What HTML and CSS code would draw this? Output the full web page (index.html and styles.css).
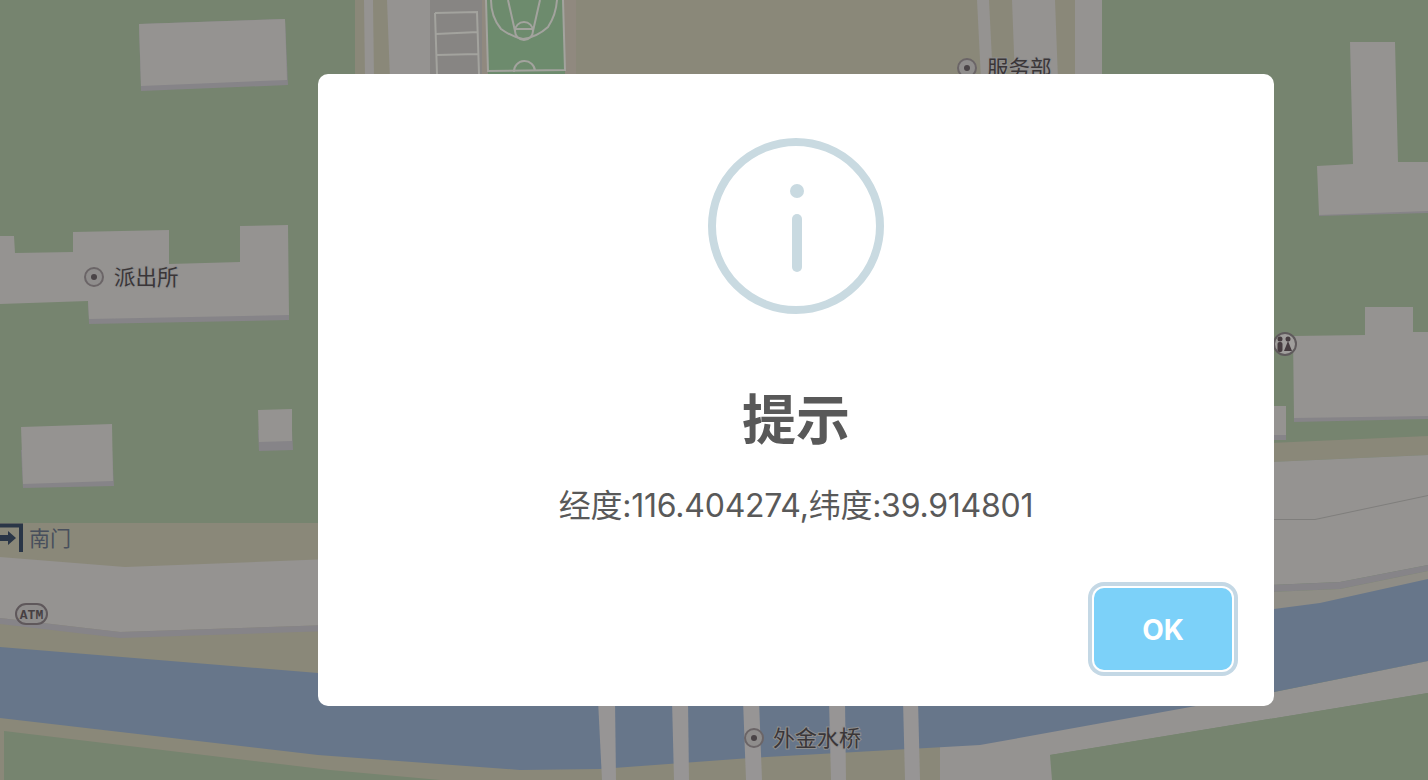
FILE: index.html
```html
<!DOCTYPE html>
<html lang="zh-CN">
<head>
  <meta charset="UTF-8">
  <meta name="viewport" content="width=device-width, initial-scale=1.0">
  <title>提示</title>
  <link rel="stylesheet" href="styles.css">
</head>
<body>
  <!-- 地图底图 -->
  <svg class="map" viewBox="0 0 1428 780" width="1428" height="780" aria-hidden="true">
    <!-- 上方地块 -->
    <rect class="sand" x="355" y="0" width="747" height="80"/>
    <polygon class="road" points="364,0 373,0 374,80 365,80"/>
    <polygon class="road" points="387,0 430,0 434,80 390,80"/>
    <rect class="court-bed" x="430" y="0" width="53" height="80"/>
    <rect class="court-edge" x="482" y="0" width="94" height="80"/>
    <polygon class="court-green" points="486,0 563,0 565,74 488,74"/>
    <g class="court-line">
      <path d="M435 13 L477 12 L479 74 M435 13 L437 74 M436 34 L478 32 M437 55 L478 54"/>
      <path d="M486 0 L488 71 L565 70 L563 0"/>
      <path d="M508 0 L515 31 M540 0 L533 31 M515 29 L533 29"/>
      <path d="M491 0 Q491 17 501 29 Q512 37 523 39 Q537 37 548 27 Q556 15 557 0"/>
      <path d="M515 31 A9 9 0 1 1 533 31 A9 9 0 0 1 515 31"/>
      <path d="M514 72 A10 10 0 0 1 535 71"/>
    </g>
    <polygon class="road" points="977,0 989,0 993,80 981,80"/>
    <polygon class="road" points="1012,0 1055,0 1058,80 1015,80"/>
    <rect class="road" x="1075" y="0" width="27" height="80"/>

    <!-- 建筑 -->
    <polygon class="shade" points="139,24 285,19 288,85 141,91"/>
    <polygon class="building" points="139,24 285,19 287,80 141,86"/>
    <polygon class="shade" points="0,300 88,298 89,324 289,320 289,310 0,290"/>
    <polygon class="building" points="0,236 14,236 15,253 73,252 73,232 169,230 169,264 240,262 240,226 288,225 289,315 89,319 88,301 0,304"/>
    <polygon class="shade" points="21,450 112,450 114,486 23,488"/>
    <polygon class="building" points="21,427 112,424 113,481 23,484"/>
    <polygon class="shade" points="258,430 292,430 293,450 259,451"/>
    <polygon class="building" points="258,410 292,409 292,441 259,442"/>
    <polygon class="shade" points="1319,190 1428,190 1428,213 1319,216"/>
    <polygon class="building" points="1350,42 1395,42 1398,162 1428,162 1428,211 1319,215 1317,166 1353,164"/>
    <polygon class="shade" points="1294,400 1428,400 1428,419 1294,422"/>
    <polygon class="building" points="1365,307 1413,307 1413,332 1428,332 1428,416 1294,418 1293,336 1365,335"/>
    <rect class="shade" x="1270" y="420" width="16" height="20"/>
    <rect class="building" x="1270" y="406" width="16" height="29"/>

    <!-- 左侧道路和河道 -->
    <polygon class="sand" points="0,523 330,523 330,690 0,660"/>
    <polygon class="road" points="0,557 125,567 330,559 330,625 120,632 0,618"/>
    <polygon class="shade" points="0,618 120,632 330,625 330,631 120,638 0,624"/>
    <polygon class="sand" points="0,640 1000,640 1000,780 0,780"/>
    <polygon class="green" points="4,731 330,770 440,780 4,780"/>

    <!-- 右侧道路 -->
    <polygon class="sand" points="1270,443 1428,436 1428,455 1270,462"/>
    <polygon class="road" points="1270,462 1428,455 1428,565 1340,582 1270,585"/>
    <polygon class="shade" points="1270,585 1340,582 1428,565 1428,571 1340,589 1270,592"/>
    <polygon class="road-dark" points="1270,592 1340,589 1428,571 1428,661 1270,692"/>
    <polygon class="road" points="940,745 1274,692 1428,661 1428,693 1050,755 1100,780 940,780"/>
    <polygon class="green" points="1050,755 1428,693 1428,780 1052,780"/>

    <!-- 河道 -->
    <polygon class="water" points="0,647 318,673 1274,609 1320,603 1428,579 1428,661 1274,692 980,745 750,758 600,769 520,770 318,755 0,718"/>
    <polygon class="road-line" points="1270,519 1315,519 1428,495 1428,496 1315,520 1270,520"/>

    <!-- 桥 -->
    <polygon class="bridge" points="598,700 615,700 616,780 602,780"/>
    <polygon class="bridge" points="672,700 688,700 689,780 674,780"/>
    <polygon class="bridge" points="743,700 759,700 762,780 746,780"/>
    <polygon class="bridge" points="829,700 845,700 846,780 831,780"/>
    <polygon class="bridge" points="903,700 918,700 920,780 905,780"/>

    <!-- 兴趣点 -->
    <circle class="poi-ring" cx="94" cy="277" r="9"/>
    <circle class="poi-dot" cx="94" cy="277" r="3"/>
    <text class="poi-text" x="114" y="285">派出所</text>
    <circle class="poi-ring" cx="967" cy="68" r="9"/>
    <circle class="poi-dot" cx="967" cy="68" r="3"/>
    <text class="poi-text" x="987" y="76">服务部</text>
    <circle class="poi-ring" cx="754" cy="738" r="9"/>
    <circle class="poi-dot" cx="754" cy="738" r="3"/>
    <text class="poi-text poi-text-wide" x="773" y="746">外金水桥</text>

    <circle class="toilet-ring" cx="1285" cy="344" r="11"/>
    <g class="poi-dark">
      <circle cx="1280" cy="339" r="2.5"/>
      <rect x="1277.5" y="342" width="5" height="10" rx="2"/>
      <circle cx="1288" cy="339" r="2.5"/>
      <polygon points="1288,341 1292,351 1284,351"/>
    </g>

    <rect class="atm-pill" x="16" y="604" width="31" height="20" rx="10"/>
    <text class="atm-text" x="31.5" y="619">ATM</text>

    <path class="door" d="M0 525.5 H21 V552"/>
    <path class="door-arrow" d="M0 535 H8 V531 L16 538 L8 545 V541 H0 Z"/>
    <text class="door-text" x="29" y="546">南门</text>
  </svg>

  <!-- 弹窗 -->
  <div class="overlay">
    <div class="modal" role="dialog">
      <div class="modal-icon">
        <span class="modal-icon-dot"></span>
        <span class="modal-icon-bar"></span>
      </div>
      <h2 class="modal-title">提示</h2>
      <p class="modal-text">经度:116.404274,纬度:39.914801</p>
      <div class="modal-footer">
        <button class="modal-btn" type="button">OK</button>
      </div>
    </div>
  </div>
</body>
</html>
```

FILE: styles.css
```css
/* 全局 */
body {
  margin: 0;
  width: 1428px;
  height: 780px;
  overflow: hidden;
  background: #76846f;
  font-family: "Inter", "Noto Sans CJK SC", sans-serif;
}

/* 地图底图 */
.map {
  position: absolute;
  left: 0;
  top: 0;
  display: block;
}

.sand { fill: #8a8879; }
.green { fill: #76846f; }
.building { fill: #959391; }
.shade { fill: #868488; }
.road { fill: #959391; }
.road-dark { fill: #8f8d86; }
.road-line { fill: #7f7e7c; }
.water { fill: #67768a; }
.bridge { fill: #979595; }

.court-bed { fill: #878583; }
.court-edge { fill: #90897f; }
.court-green { fill: #6d8b6d; }
.court-line path {
  fill: none;
  stroke: #a3a39e;
  stroke-width: 2;
}

.poi-ring {
  fill: #8f8d8c;
  stroke: #6b6567;
  stroke-width: 2;
}
.poi-dot { fill: #4a4447; }
.poi-dark { fill: #463c40; }
.poi-text {
  font-size: 21.5px;
  fill: #3a3638;
  stroke: #8f8e8e;
  stroke-width: 2px;
  paint-order: stroke;
  font-family: "Noto Sans CJK SC", sans-serif;
}
.poi-text-wide { font-size: 22px; }

.toilet-ring {
  fill: #a09e9c;
  stroke: #5f5a5c;
  stroke-width: 2;
}

.atm-pill {
  fill: #8f8d8c;
  stroke: #5f585b;
  stroke-width: 2;
}
.atm-text {
  font-family: "Liberation Mono", monospace;
  font-size: 13px;
  font-weight: bold;
  fill: #463f42;
  text-anchor: middle;
}

.door {
  fill: none;
  stroke: #2a3647;
  stroke-width: 4;
}
.door-arrow { fill: #2a3647; }
.door-text {
  font-size: 21px;
  fill: #484f5c;
  font-family: "Noto Sans CJK SC", sans-serif;
}

/* 弹窗 */
.overlay {
  position: fixed;
  left: 0;
  top: 0;
  right: 0;
  bottom: 0;
  display: flex;
  align-items: center;
  justify-content: center;
  padding-left: 164px;
}

.modal {
  width: 956px;
  height: 632px;
  box-sizing: border-box;
  padding-top: 64px;
  background: #fff;
  border-radius: 10px;
  display: flex;
  flex-direction: column;
  align-items: center;
}

.modal-icon {
  width: 176px;
  height: 176px;
  box-sizing: border-box;
  border: 8px solid #c9dae1;
  border-radius: 50%;
  display: flex;
  flex-direction: column;
  align-items: center;
  padding: 38px 0 0 2px;
}

.modal-icon-dot {
  width: 14px;
  height: 14px;
  border-radius: 50%;
  background: #c9dae1;
}

.modal-icon-bar {
  width: 10px;
  height: 58px;
  margin-top: 16px;
  border-radius: 5px;
  background: #c9dae1;
}

.modal-title {
  margin: 75px 0 0;
  font-size: 54px;
  line-height: 64px;
  font-weight: 700;
  color: #595959;
}

.modal-text {
  margin: 31px 0 0;
  font-size: 32px;
  line-height: 44px;
  letter-spacing: -0.25px;
  color: #595959;
}

.modal-footer {
  margin-top: auto;
  align-self: stretch;
  display: flex;
  justify-content: flex-end;
  padding: 0 42px 36px 0;
}

.modal-btn {
  width: 138px;
  height: 82px;
  padding: 2px 0 0;
  border: none;
  border-radius: 10px;
  background: #7cd1f9;
  color: #fff;
  font-family: inherit;
  font-size: 28px;
  font-weight: 700;
  box-shadow: 0 0 0 2px #fff, 0 0 0 6px #c4d8e5;
}
```
